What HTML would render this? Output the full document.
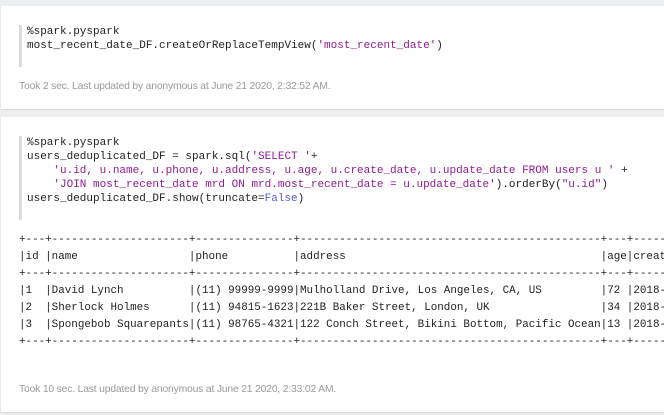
<!DOCTYPE html>
<html><head><style>
html,body{margin:0;padding:0;width:664px;height:415px;overflow:hidden;background:#eceeef;position:relative}
.card{position:absolute;left:1px;width:663px;background:#fff;box-shadow:0 1px 1px #d8d8d8;overflow:hidden}
.bar{position:absolute;left:19px;width:3px;background:#dcdcdc}
.code{position:absolute;left:27px;font-family:"Liberation Mono",monospace;font-size:11px;line-height:14px;color:#222;white-space:pre}
.s{color:#8f1c8f}
.k{color:#5b5bd6}
.out{position:absolute;left:18px;top:115px;font-family:"Liberation Mono",monospace;font-size:10.9px;line-height:17px;color:#222;white-space:pre}
.ft{position:absolute;left:19px;font-family:"Liberation Sans",sans-serif;font-size:10.4px;color:#9a9a9a;letter-spacing:-0.2px}
</style></head><body>
<div class="card" style="top:6px;height:103px"></div>
<div class="bar" style="top:25px;height:42px"></div>
<div class="code" style="top:25px">%spark.pyspark
most_recent_date_DF.createOrReplaceTempView(<span class="s">'most_recent_date'</span>)</div>
<div class="ft" style="top:81px">Took 2 sec. Last updated by anonymous at June 21 2020, 2:32:52 AM.</div>

<div class="card" style="top:117px;height:295px">
<div class="out">+---+---------------------+---------------+----------------------------------------------+---+-------------------+
|id |name                 |phone          |address                                       |age|create_date        |
+---+---------------------+---------------+----------------------------------------------+---+-------------------+
|1  |David Lynch          |(11) 99999-9999|Mulholland Drive, Los Angeles, CA, US         |72 |2018-03-03 12:00:00|
|2  |Sherlock Holmes      |(11) 94815-1623|221B Baker Street, London, UK                 |34 |2018-04-04 12:00:00|
|3  |Spongebob Squarepants|(11) 98765-4321|122 Conch Street, Bikini Bottom, Pacific Ocean|13 |2018-05-05 12:00:00|
+---+---------------------+---------------+----------------------------------------------+---+-------------------+</div>
</div>
<div class="bar" style="top:136px;height:84px"></div>
<div class="code" style="top:136px;width:637px;overflow:hidden">%spark.pyspark
users_deduplicated_DF = spark.sql(<span class="s">'SELECT '</span>+
    <span class="s">'u.id, u.name, u.phone, u.address, u.age, u.create_date, u.update_date FROM users u '</span> +
    <span class="s">'JOIN most_recent_date mrd ON mrd.most_recent_date = u.update_date'</span>).orderBy(<span class="s">"u.id"</span>)
users_deduplicated_DF.show(truncate=<span class="k">False</span>)</div>
<div class="ft" style="top:384px">Took 10 sec. Last updated by anonymous at June 21 2020, 2:33:02 AM.</div>
</body></html>
